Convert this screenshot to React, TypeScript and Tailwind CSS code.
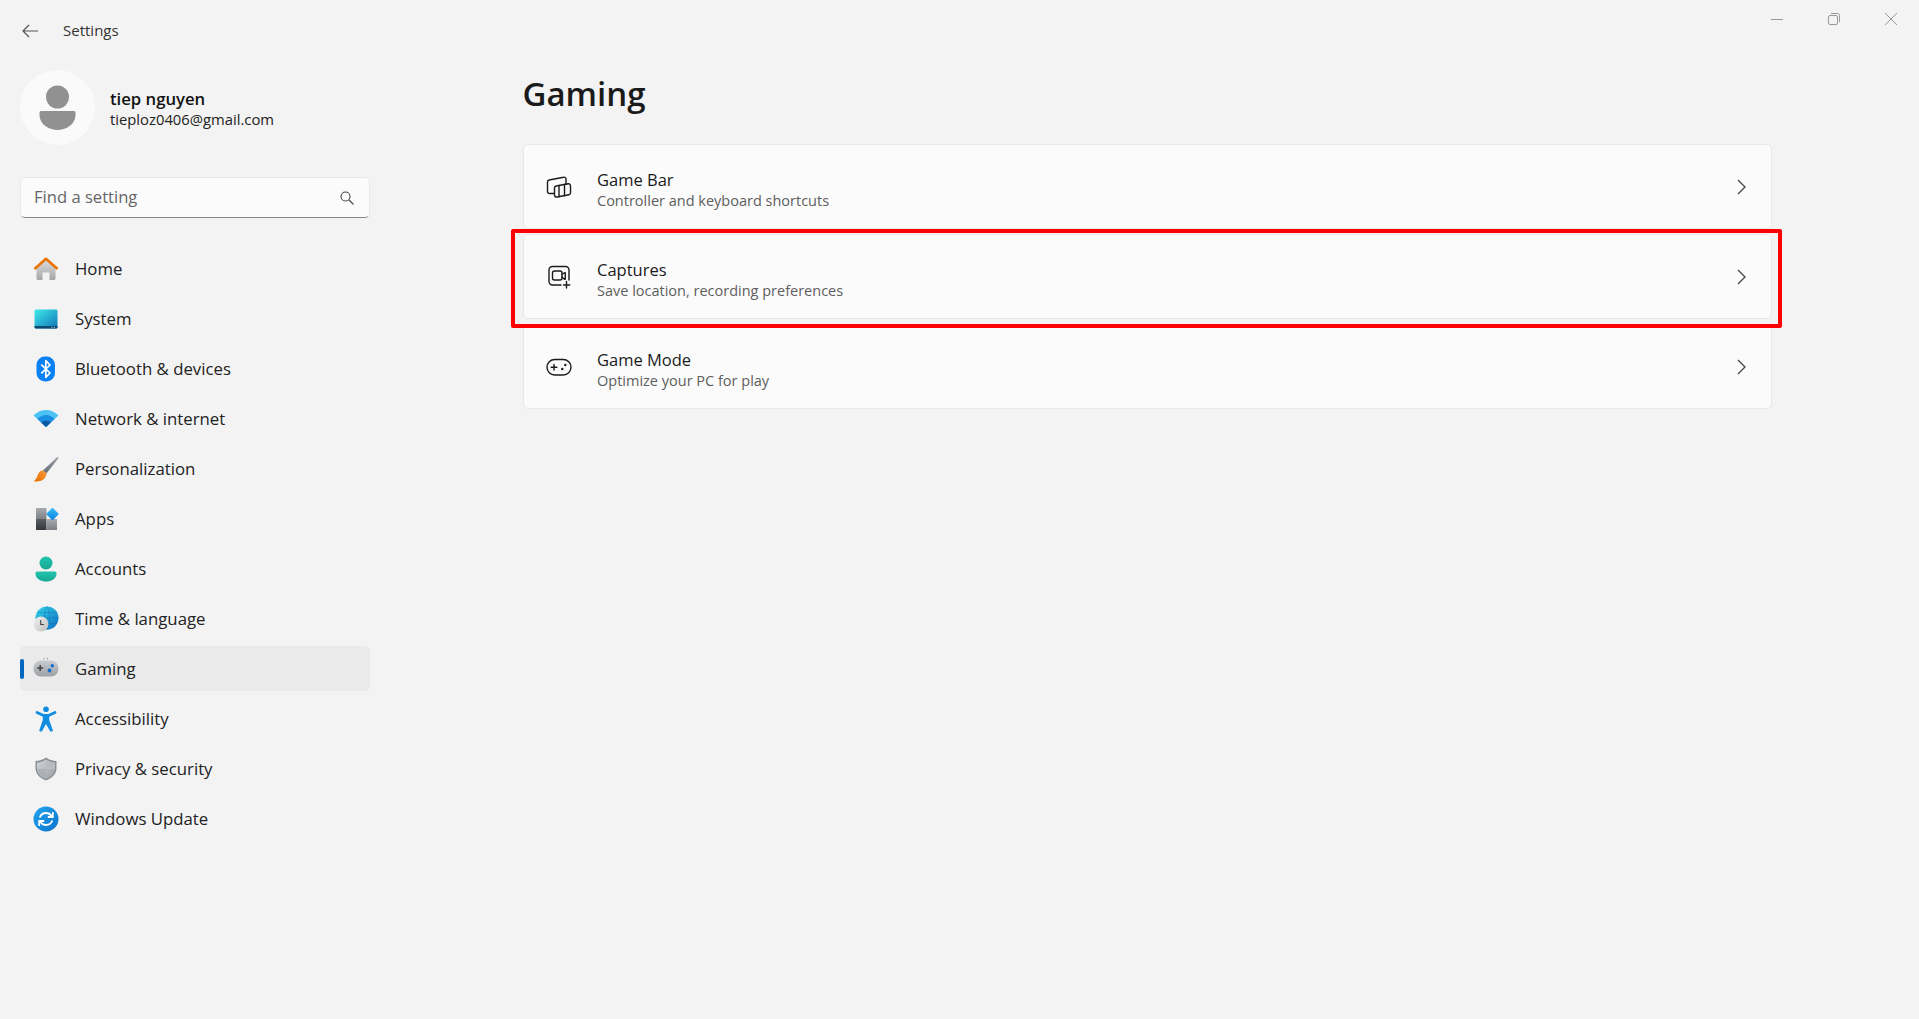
import React from "react";

const Ico = ({ children }: { children: React.ReactNode }) => (
  <svg width="26" height="26" viewBox="0 0 26 26" fill="none" className="shrink-0">{children}</svg>
);

const Home = () => (
  <Ico>
    <defs>
      <linearGradient id="hb" x1="0" y1="0" x2="0" y2="1"><stop offset="0" stopColor="#dcdcdc" /><stop offset="1" stopColor="#a6a6a6" /></linearGradient>
    </defs>
    <path d="M3.500 12 13 4l9.500 8v10.500a1.500 1.500 0 0 1-1.500 1.500H16.500v-7.500h-7V24H5a1.500 1.500 0 0 1-1.500-1.500Z" fill="url(#hb)" />
    <path d="M1.500 13 13 2.800 24.500 13" stroke="#ea7300" strokeWidth="2.600" strokeLinejoin="round" />
  </Ico>
);
const System = () => (
  <Ico>
    <defs>
      <linearGradient id="sy" x1="0" y1="0" x2="1" y2="1"><stop offset="0" stopColor="#3eeaea" /><stop offset="1" stopColor="#0f74b8" /></linearGradient>
    </defs>
    <rect x="1.500" y="3.500" width="23" height="19" rx="1.500" fill="url(#sy)" />
    <path d="M1.500 20h23v1a1.500 1.500 0 0 1-1.500 1.500H3A1.500 1.500 0 0 1 1.500 21Z" fill="#0b4a70" />
    <rect x="18.500" y="20.800" width="1" height="1" fill="#cde" />
    <rect x="20.800" y="20.800" width="1" height="1" fill="#cde" />
  </Ico>
);
const Bluetooth = () => (
  <Ico>
    <rect x="3.500" y="0.500" width="18.500" height="25" rx="8.500" fill="#0a80f5" />
    <path d="M8.300 8.600 17 17l-4.200 4.300V4.700L17 9l-8.700 8.400" stroke="#fff" strokeWidth="1.700" strokeLinejoin="round" />
  </Ico>
);
const Wifi = () => (
  <Ico>
    <path d="M0.500 9.500C7 2 19 2 25.500 9.500L13 21Z" fill="#4cc2f5" />
    <path d="M4.500 13C9.500 7.700 16.500 7.700 21.500 13L13 21Z" fill="#1a8ee0" />
    <path d="M8.300 16.700C11 14.200 15 14.200 17.700 16.700L13 21Z" fill="#0c5aa6" />
  </Ico>
);
const Brush = () => (
  <Ico>
    <defs>
      <linearGradient id="br" x1="1" y1="0" x2="0" y2="1"><stop offset="0" stopColor="#a2a6ab" /><stop offset="1" stopColor="#636a75" /></linearGradient>
      <linearGradient id="bo" x1="1" y1="0" x2="0" y2="1"><stop offset="0" stopColor="#f59a3c" /><stop offset="1" stopColor="#ea7000" /></linearGradient>
    </defs>
    <path d="M24.500 0.800c.9.600 1 1.300.4 2.100L13.500 17.500l-3.500-3Z" fill="url(#br)" />
    <path d="M9.800 14.300l4 3.500c-1 3.500-3 6-5.500 7-2.700.8-5.500.7-7.500.4 2-1.500 2.800-3.200 3.800-6 1-3 3-4.700 5.200-4.900Z" fill="url(#bo)" />
  </Ico>
);
const Apps = () => (
  <Ico>
    <defs>
      <linearGradient id="ap" x1="0" y1="0" x2="0" y2="1"><stop offset="0" stopColor="#a6a9ad" /><stop offset="1" stopColor="#7d8084" /></linearGradient>
      <linearGradient id="ad" x1="0" y1="0" x2="0" y2="1"><stop offset="0" stopColor="#5a5e62" /><stop offset="1" stopColor="#33363a" /></linearGradient>
      <linearGradient id="ab" x1="0" y1="0" x2="1" y2="1"><stop offset="0" stopColor="#33c0fa" /><stop offset="1" stopColor="#0f7fe0" /></linearGradient>
    </defs>
    <path d="M3.500 2h10v11h-10.500V2.500A.5.5 0 0 1 3.500 2Z" fill="url(#ap)" />
    <path d="M3 13h10.500v11h-10a.5.5 0 0 1-.5-.5Z" fill="url(#ad)" />
    <rect x="13.500" y="13" width="10.500" height="11" fill="url(#ap)" />
    <rect x="15" y="3.500" width="9" height="9" rx="1" transform="rotate(45 19.500 8)" fill="url(#ab)" />
  </Ico>
);
const Accounts = () => (
  <Ico>
    <defs>
      <linearGradient id="ac" x1="0" y1="0" x2="0" y2="1"><stop offset="0" stopColor="#22c4ae" /><stop offset="1" stopColor="#16a894" /></linearGradient>
    </defs>
    <circle cx="13" cy="7" r="6.500" fill="url(#ac)" />
    <path d="M4 15.500h18a1.500 1.500 0 0 1 1.500 1.500v1c0 5-6 7.500-10.500 7.500S2.500 23 2.500 18v-1A1.500 1.500 0 0 1 4 15.500Z" fill="url(#ac)" />
  </Ico>
);
const TimeIcon = () => (
  <Ico>
    <defs>
      <linearGradient id="gl" x1="0" y1="0" x2="1" y2="1"><stop offset="0" stopColor="#35d4e6" /><stop offset="1" stopColor="#0c6fc4" /></linearGradient>
      <linearGradient id="cl" x1="0" y1="0" x2="1" y2="1"><stop offset="0" stopColor="#f4f4f4" /><stop offset="1" stopColor="#bdbdbd" /></linearGradient>
    </defs>
    <circle cx="14" cy="12" r="11.500" fill="url(#gl)" />
    <path d="M14 .5C10.500 4 10.500 20 14 23.500M14 .5C17.500 4 17.500 20 14 23.500M2.500 12h23M4 6.500h20M4 17.500h20" stroke="#0a5ca8" strokeWidth=".5" opacity=".6" />
    <circle cx="8" cy="18" r="7.500" fill="url(#cl)" />
    <path d="M7.700 14v4.500h3.300" stroke="#444" strokeWidth="1.100" />
  </Ico>
);
const Gaming = () => (
  <Ico>
    <defs>
      <linearGradient id="ga" x1="0" y1="0" x2="0" y2="1"><stop offset="0" stopColor="#c9ccd0" /><stop offset="1" stopColor="#9da0a5" /></linearGradient>
    </defs>
    <rect x="0.500" y="4.500" width="25" height="16" rx="7.500" fill="url(#ga)" />
    <path d="M7.200 9v6M4.200 12h6" stroke="#444" strokeWidth="1.600" />
    <circle cx="19.300" cy="9.800" r="1.700" fill="#0f6cd0" />
    <circle cx="16.500" cy="14.500" r="1.900" fill="#0f6cd0" />
    <rect x="10.500" y="2.200" width="1" height="1" fill="#777" />
    <rect x="14" y="2.200" width="1" height="1" fill="#777" />
  </Ico>
);
const Access = () => (
  <Ico>
    <circle cx="13" cy="3.300" r="2.800" fill="#0f8de0" />
    <path d="M4 6.500 10 9.300h6l6-2.800" stroke="#0f8de0" strokeWidth="2.800" strokeLinecap="round" strokeLinejoin="round" />
    <path d="M9.800 9h6.400v5l3.600 10.300c.4 1.200-2 1.700-2.700.9L13 18l-4 7.200c-.7.800-3.100.3-2.700-.9L9.800 14Z" fill="#0f8de0" />
  </Ico>
);
const Shield = () => (
  <Ico>
    <defs>
      <linearGradient id="sh" x1="0" y1="0" x2="1" y2="1"><stop offset="0" stopColor="#d4d6d9" /><stop offset="1" stopColor="#9ba0a5" /></linearGradient>
    </defs>
    <path d="M13 1.500c3 2.200 6.700 3.500 10.500 3.500v7.500c0 5-4 9.500-10.500 12C6.500 22 2.500 17.500 2.500 12.500V5C6.300 5 10 3.700 13 1.500Z" fill="#8b9095" />
    <path d="M13 3.500c2.800 2 5.800 3 9 3.200v6c0 4.300-3.400 8-9 10.200-5.600-2.200-9-5.900-9-10.200v-6c3.200-.2 6.200-1.200 9-3.200Z" fill="url(#sh)" />
    <path d="M13 3.500v9.500h9v-.3 0-6c-3.200-.2-6.200-1.200-9-3.200Z" fill="#b9bcc0" />
    <path d="M13 13H4c0 4.300 3.400 8 9 9.900Z" fill="#aeb1b6" />
  </Ico>
);
const Update = () => (
  <Ico>
    <defs>
      <linearGradient id="up" x1="0" y1="0" x2="1" y2="1"><stop offset="0" stopColor="#22a4ee" /><stop offset="1" stopColor="#0c74cc" /></linearGradient>
    </defs>
    <circle cx="13" cy="13" r="12.500" fill="url(#up)" />
    <path d="M6.800 11.500C7.800 8.500 10.300 7 13 7c2.500 0 4.300 1.100 5.700 3M19.200 14.500C18.300 17.500 15.700 19 13 19c-2.500 0-4.300-1.100-5.700-3" stroke="#fff" strokeWidth="1.800" />
    <path d="M19.800 6v5h-5M6.200 20v-5h5" stroke="#fff" strokeWidth="1.800" />
  </Ico>
);

const GameBarIcon = () => (
  <Ico>
    <g stroke="#1b1b1b" strokeWidth="1.400" strokeLinecap="round" strokeLinejoin="round">
      <path d="M8 19.500H3.500a2 2 0 0 1-2-2V8a2 2 0 0 1 1.700-2L17.500 3.200A2 2 0 0 1 20 5.200v5" />
      <path d="M8.500 14a2 2 0 0 1 1.700-2l12-2.300a2 2 0 0 1 2.300 2v7a2 2 0 0 1-1.600 2L11 23a2 2 0 0 1-2.500-2Z" />
      <path d="M13 11.500v11.300M18.500 10.500v11.300" />
    </g>
  </Ico>
);
const CaptureIcon = () => (
  <Ico>
    <g stroke="#1b1b1b" strokeWidth="1.400" strokeLinecap="round" strokeLinejoin="round">
      <path d="M15 21H6.500A3.500 3.500 0 0 1 3 17.500V6A3.500 3.500 0 0 1 6.500 2.500h13A3.500 3.500 0 0 1 23 6v10" />
      <rect x="6.500" y="7" width="9.500" height="9" rx="2" />
      <path d="M16 10.500l2.500-1.800c.4-.2.800 0 .8.500v5.600c0 .5-.4.700-.8.500L16 13" />
      <path d="M20.500 17.500v6.500M17.500 21h6.300" />
    </g>
  </Ico>
);
const GameModeIcon = () => (
  <Ico>
    <rect x="1" y="5.500" width="24" height="15.500" rx="7.700" stroke="#1b1b1b" strokeWidth="1.400" />
    <path d="M8 10.500v5.500M5.200 13.300h5.600" stroke="#1b1b1b" strokeWidth="1.400" strokeLinecap="round" />
    <circle cx="19.300" cy="11" r="1.200" fill="#1b1b1b" />
    <circle cx="16.300" cy="15" r="1.200" fill="#1b1b1b" />
  </Ico>
);

const nav: { label: string; icon: React.ReactNode; active?: boolean }[] = [
  { label: "Home", icon: <Home /> },
  { label: "System", icon: <System /> },
  { label: "Bluetooth & devices", icon: <Bluetooth /> },
  { label: "Network & internet", icon: <Wifi /> },
  { label: "Personalization", icon: <Brush /> },
  { label: "Apps", icon: <Apps /> },
  { label: "Accounts", icon: <Accounts /> },
  { label: "Time & language", icon: <TimeIcon /> },
  { label: "Gaming", icon: <Gaming />, active: true },
  { label: "Accessibility", icon: <Access /> },
  { label: "Privacy & security", icon: <Shield /> },
  { label: "Windows Update", icon: <Update /> },
];

const cards = [
  { title: "Game Bar", sub: "Controller and keyboard shortcuts", icon: <GameBarIcon /> },
  { title: "Captures", sub: "Save location, recording preferences", icon: <CaptureIcon /> },
  { title: "Game Mode", sub: "Optimize your PC for play", icon: <GameModeIcon /> },
];

export default function App() {
  return (
    <div className="flex h-[1019px] w-full overflow-hidden bg-[#f3f3f3] text-[#1b1b1b] font-['Open_Sans','Noto_Sans',sans-serif]">
      <aside className="w-[400px] shrink-0 pl-5 pr-[30px]">
        <div className="flex h-[62px] items-center pl-[2px]">
          <svg width="16" height="14" viewBox="0 0 16 14" fill="none" stroke="#555" strokeWidth="1.200">
            <path d="M16 7H1M7 1 1 7l6 6" />
          </svg>
          <span className="ml-[25px] -mt-[2px] text-[15px] text-[#333]">Settings</span>
        </div>
        <div className="mt-2 flex h-[75px] items-center">
          <div className="h-[75px] w-[75px] shrink-0 rounded-full bg-[#fafafa]">
            <svg width="75" height="75" viewBox="0 0 75 75" fill="#919191">
              <circle cx="37.500" cy="27" r="11.500" />
              <path d="M21 41h33a1.500 1.500 0 0 1 1.500 1.500V45C55.500 55 45 60 37.500 60S19.500 55 19.500 45v-2.500A1.500 1.500 0 0 1 21 41Z" />
            </svg>
          </div>
          <div className="ml-[15px] mt-[2px] flex flex-col">
            <span className="text-[16.700px] font-semibold leading-[21px] text-[#111]">tiep nguyen</span>
            <span className="text-[14.800px] leading-[20px] text-[#222]">tieploz0406@gmail.com</span>
          </div>
        </div>
        <div className="mt-[32px] flex h-[41px] w-[350px] items-center justify-between rounded-[5px] border border-[#e8e8e8] border-b-[#868686] bg-[#fbfbfb] pl-[13px] pr-[15px]">
          <span className="text-[16.600px] text-[#666]">Find a setting</span>
          <svg width="14" height="14" viewBox="0 0 14 14" fill="none" stroke="#444" strokeWidth="1.100">
            <circle cx="5.500" cy="5.500" r="4.500" />
            <path d="M9 9l4.500 4.500" />
          </svg>
        </div>
        <nav className="mt-[28px] flex flex-col gap-[5px]">
          {nav.map((n) => (
            <div
              key={n.label}
              className={`relative flex h-[45px] items-center rounded-[5px] pl-[12.500px] ${n.active ? "bg-[#eaeaea]" : ""}`}
            >
              {n.active && <span className="absolute left-0 top-[13px] h-[20px] w-1 rounded-full bg-[#0067c0]" />}
              {n.icon}
              <span className="ml-[16.500px] mt-[1px] text-[16.800px] text-[#222]">{n.label}</span>
            </div>
          ))}
        </nav>
      </aside>
      <main className="flex min-w-0 flex-1 flex-col">
        <div className="flex justify-end gap-[45px] pt-[13px] pr-[22px]">
          <svg width="12" height="12" viewBox="0 0 12 12" fill="none" stroke="#999" strokeWidth="1"><path d="M0 6.500h12" /></svg>
          <svg width="12" height="12" viewBox="0 0 12 12" fill="none" stroke="#999" strokeWidth="1">
            <rect x=".5" y="2.500" width="9" height="9" rx="1.500" />
            <path d="M3 .5h6.500a2 2 0 0 1 2 2V9" />
          </svg>
          <svg width="12" height="12" viewBox="0 0 12 12" fill="none" stroke="#999" strokeWidth="1"><path d="M0 0l12 12M12 0 0 12" /></svg>
        </div>
        <h1 className="mt-[47px] ml-[122.500px] h-[44px] text-[33px] font-semibold leading-[44px] text-[#1a1a1a]">Gaming</h1>
        <div className="relative mt-[28px] ml-[123px] mr-[147px] flex flex-col gap-[5px]">
          {cards.map((c) => (
            <div key={c.title} className="flex h-[85px] items-center rounded-[5px] border border-[#e8e8e8] bg-[#fbfbfb] pl-[22px] pr-[25px]">
              {c.icon}
              <div className="ml-[25px] mt-[6px] flex flex-1 flex-col">
                <span className="mb-[1px] text-[16.500px] leading-[21px] text-[#1b1b1b]">{c.title}</span>
                <span className="text-[14.500px] leading-[20px] text-[#5e5e5e]">{c.sub}</span>
              </div>
              <svg width="9" height="16" viewBox="0 0 9 16" fill="none" stroke="#444" strokeWidth="1.300"><path d="M1 1l7 7-7 7" /></svg>
            </div>
          ))}
          <div className="absolute -left-3 -right-[10px] top-[85px] h-[99px] rounded-[2px] border-4 border-[#ff0000]" />
        </div>
      </main>
    </div>
  );
}
